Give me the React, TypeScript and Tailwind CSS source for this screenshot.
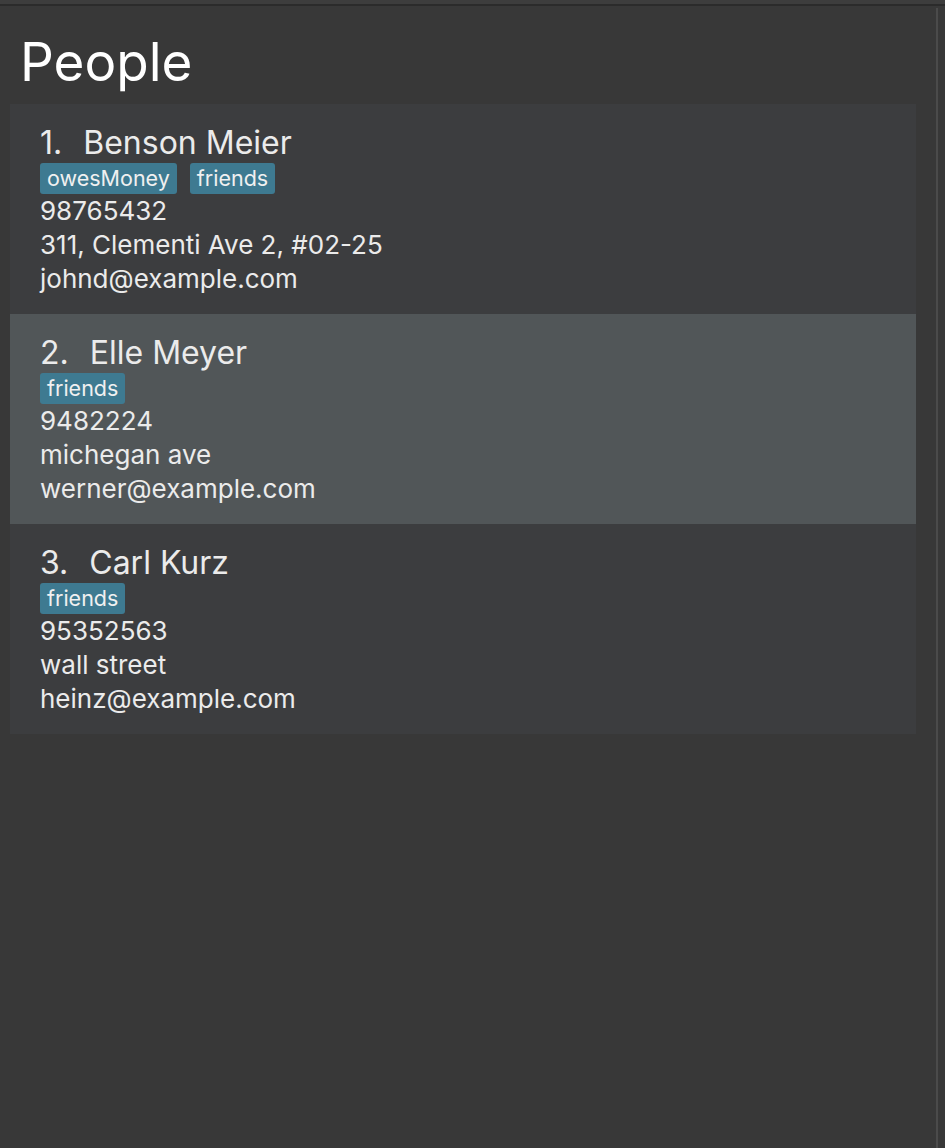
const people = [
  {
    name: 'Benson Meier',
    tags: ['owesMoney', 'friends'],
    phone: '98765432',
    address: '311, Clementi Ave 2, #02-25',
    email: 'johnd@example.com',
  },
  {
    name: 'Elle Meyer',
    tags: ['friends'],
    phone: '9482224',
    address: 'michegan ave',
    email: 'werner@example.com',
  },
  {
    name: 'Carl Kurz',
    tags: ['friends'],
    phone: '95352563',
    address: 'wall street',
    email: 'heinz@example.com',
  },
];

const selected = 1;

export default function App() {
  return (
    <div
      className="h-[1148px] w-[945px] flex flex-col bg-[#383838] overflow-hidden"
      style={{ fontFamily: 'Inter, "Open Sans", sans-serif' }}
    >
      <div className="h-[4px] bg-[#3d3d3d]" />
      <div className="h-[2px] bg-[#2b2b2b]" />
      <div className="flex-1 flex">
        <div className="w-[916px] pl-[10px] flex flex-col">
          <h1 className="pl-[10px] pt-[24px] h-[98px] text-[53px] leading-[64px] text-white">People</h1>
          <ul className="flex flex-col">
            {people.map((p, i) => (
              <li
                key={p.name}
                className={`h-[210px] pl-[30px] pt-[19px] flex flex-col text-[#ebebeb] ${
                  i === selected ? 'bg-[#515658]' : 'bg-[#3c3d3f]'
                }`}
              >
                <div className="h-[40px] text-[32px] leading-[40px] flex gap-[21px]">
                  <span>{i + 1}.</span>
                  <span>{p.name}</span>
                </div>
                <div className="flex gap-[13px] h-[31px]">
                  {p.tags.map((t) => (
                    <span
                      key={t}
                      className="h-[31px] px-[7px] rounded-[3px] bg-[#3e7a91] text-[21.5px] leading-[31px] text-[#f0f0f0]"
                    >
                      {t}
                    </span>
                  ))}
                </div>
                <div className="text-[26px] leading-[34px]">{p.phone}</div>
                <div className="text-[26px] leading-[34px]">{p.address}</div>
                <div className="text-[26px] leading-[34px]">{p.email}</div>
              </li>
            ))}
          </ul>
        </div>
        <div className="w-[20px]" />
        <div className="w-[2px] mt-[2px] bg-[#4b4b4b]" />
      </div>
    </div>
  );
}
